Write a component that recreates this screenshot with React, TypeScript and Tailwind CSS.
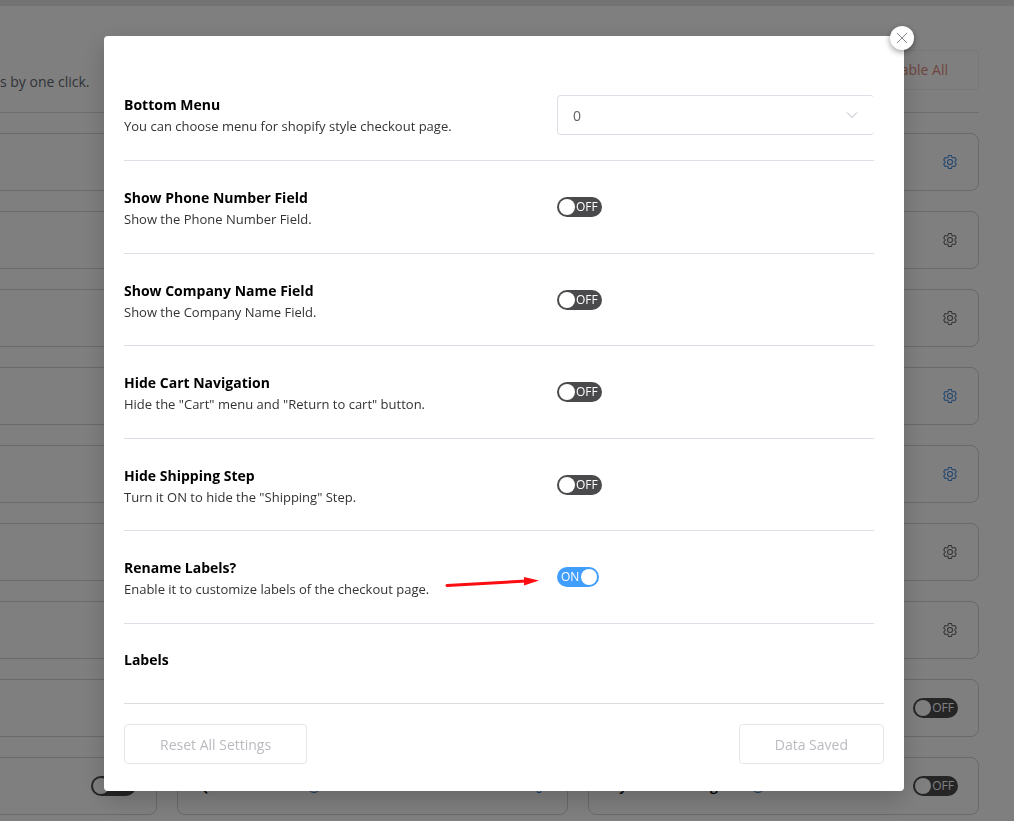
import React, { useState } from 'react';
import clsx from 'clsx';

interface ISetting {
  id: string;
  title: string;
  description: string;
  enabled: boolean;
}

interface IToggle {
  label: string;
  defaultOn?: boolean;
}

interface IRow {
  title: string;
  description: string;
  className?: string;
  children: React.ReactNode;
}

const SETTINGS: ISetting[] = [
  {
    id: 'phone',
    title: 'Show Phone Number Field',
    description: 'Show the Phone Number Field.',
    enabled: false,
  },
  {
    id: 'company',
    title: 'Show Company Name Field',
    description: 'Show the Company Name Field.',
    enabled: false,
  },
  {
    id: 'cart',
    title: 'Hide Cart Navigation',
    description: 'Hide the "Cart" menu and "Return to cart" button.',
    enabled: false,
  },
  {
    id: 'shipping',
    title: 'Hide Shipping Step',
    description: 'Turn it ON to hide the "Shipping" Step.',
    enabled: false,
  },
  {
    id: 'labels',
    title: 'Rename Labels?',
    description: 'Enable it to customize labels of the checkout page.',
    enabled: true,
  },
];

// state of the gear in the right-hand column of each module row
const GEARS = ['active', 'idle', 'idle', 'active', 'active', 'idle', 'idle'];

const Toggle = ({ label, defaultOn = false }: IToggle) => {
  const [isOn, setIsOn] = useState<boolean>(defaultOn);

  return (
    <button
      type="button"
      role="switch"
      aria-checked={isOn}
      aria-label={label}
      onClick={() => setIsOn((prev) => !prev)}
      className={clsx(
        'flex h-5 shrink-0 cursor-pointer items-center rounded-full px-0.5 text-[12px] leading-4 text-white',
        isOn ? 'flex-row-reverse bg-[#409eff]' : 'bg-[#4a4a4d]'
      )}
    >
      <span className="h-4 w-4 rounded-full bg-white" />
      <span className={isOn ? 'px-0.5' : 'pr-0.5 pl-px'}>{isOn ? 'ON' : 'OFF'}</span>
    </button>
  );
};

const GearIcon = () => (
  <svg viewBox="0 0 1024 1024" className="h-4 w-4" fill="currentColor" aria-hidden="true">
    <path d="M600.704 64a32 32 0 0 1 30.464 22.208l35.2 109.376c14.784 7.232 28.928 15.36 42.432 24.512l112.384-24.192a32 32 0 0 1 34.432 15.36L944.32 364.8a32 32 0 0 1-4.032 37.504l-77.12 85.12a357.12 357.12 0 0 1 0 49.024l77.12 85.248a32 32 0 0 1 4.032 37.504l-88.704 153.6a32 32 0 0 1-34.432 15.296L708.8 803.904c-13.44 9.088-27.648 17.28-42.368 24.512l-35.264 109.376A32 32 0 0 1 600.704 960H423.296a32 32 0 0 1-30.464-22.208L357.696 828.48a351.616 351.616 0 0 1-42.56-24.64l-112.32 24.256a32 32 0 0 1-34.432-15.36L79.68 659.2a32 32 0 0 1 4.032-37.504l77.12-85.248a357.12 357.12 0 0 1 0-48.896l-77.12-85.248A32 32 0 0 1 79.68 364.8l88.704-153.6a32 32 0 0 1 34.432-15.296l112.32 24.256c13.568-9.152 27.776-17.408 42.56-24.64l35.2-109.312A32 32 0 0 1 423.232 64H600.64zm-23.424 64H446.72l-36.352 113.088-24.512 11.968a294.113 294.113 0 0 0-34.816 20.096l-22.656 15.36-116.224-25.088-65.28 113.152 79.68 88.192-1.92 27.136a293.12 293.12 0 0 0 0 40.192l1.92 27.136-79.808 88.192 65.344 113.152 116.224-25.024 22.656 15.296a294.113 294.113 0 0 0 34.816 20.096l24.512 11.968L446.72 896h130.688l36.48-113.152 24.448-11.904a288.282 288.282 0 0 0 34.752-20.096l22.592-15.296 116.288 25.024 65.28-113.152-79.744-88.192 1.92-27.136a293.12 293.12 0 0 0 0-40.256l-1.92-27.136 79.808-88.128-65.344-113.152-116.288 24.96-22.592-15.232a287.616 287.616 0 0 0-34.752-20.096l-24.448-11.904L577.344 128zM512 320a192 192 0 1 1 0 384 192 192 0 0 1 0-384zm0 64a128 128 0 1 0 0 256 128 128 0 0 0 0-256z" />
  </svg>
);

const HelpIcon = () => (
  <svg viewBox="0 0 16 16" className="h-4 w-4 text-[#2f6fb8]" fill="none" stroke="currentColor" aria-hidden="true">
    <circle cx="8" cy="8" r="6.500" />
    <path d="M6 6.500a2 2 0 1 1 2.600 1.900c-.4.2-.6.5-.6 1.100M8 11v1" />
  </svg>
);

const Card = ({ children }: { children?: React.ReactNode }) => (
  <div className="flex h-[58px] items-center justify-between rounded-lg border border-[#d4d4d4] px-5 text-sm">
    {children}
  </div>
);

const GearButton = ({ active }: { active: boolean }) => (
  <button
    type="button"
    aria-label="Module settings"
    className={clsx('ml-auto', active ? 'text-[#3a86dd]' : 'text-[#606266]')}
  >
    <GearIcon />
  </button>
);

const ToggleCard = ({ children }: { children?: React.ReactNode }) => (
  <Card>
    {children}
    <div className="ml-auto">
      <Toggle label="Module" />
    </div>
  </Card>
);

const ModulesPage = () => (
  <div className="h-screen overflow-hidden border-t-[6px] border-[#e6e6e6] bg-white text-[#5f6773]">
    <div className="mr-[35px] flex h-[107px] items-end justify-between border-b border-[#dcdcdc] pb-5">
      <p className="text-sm">s by one click.</p>
      <button
        type="button"
        className="mb-0.5 h-10 rounded border border-[#f0f0f0] px-[30px] text-sm text-[#e08a80]"
      >
        Disable All
      </button>
    </div>
    <div className="mt-5 mr-[35px] -ml-[234px] grid grid-cols-3 gap-5">
      {GEARS.map((gear, index) => (
        <React.Fragment key={index}>
          <Card />
          <Card />
          <Card>
            <GearButton active={gear === 'active'} />
          </Card>
        </React.Fragment>
      ))}
      <Card />
      <Card />
      <ToggleCard />
      <ToggleCard />
      <Card>
        <span className="flex items-center gap-1 font-semibold text-black">
          Quick View Box
          <HelpIcon />
        </span>
        <GearButton active />
      </Card>
      <ToggleCard>
        <span className="flex items-center gap-1 font-semibold text-black">
          Dynamic Pricing Tab
          <HelpIcon />
        </span>
      </ToggleCard>
    </div>
  </div>
);

const Row = ({ title, description, className, children }: IRow) => (
  <div className={clsx('flex items-center border-b border-[#dcdfe6] pt-6 pb-[23px]', className)}>
    <div className="w-[433px] shrink-0 pt-0.5">
      <h3 className="mb-0.5 text-sm leading-normal font-bold text-black">{title}</h3>
      <p className="text-[13px] leading-normal text-[#333]">{description}</p>
    </div>
    {children}
  </div>
);

const Arrow = () => (
  <svg viewBox="0 0 96 14" className="absolute top-11 left-80 h-3.5 w-24" aria-hidden="true">
    <path d="M3 10.500 83 6" stroke="#fb0d12" strokeWidth="3" strokeLinecap="round" />
    <path d="M80 2 95 5.500 80 10.500Z" fill="#fb0d12" />
  </svg>
);

const SettingsDialog = () => (
  <div
    role="dialog"
    aria-label="Checkout settings"
    className="relative flex h-full w-full max-w-[800px] flex-col rounded bg-white shadow-[0_8px_24px_rgba(0,0,0,0.2)]"
  >
    <button
      type="button"
      aria-label="Close"
      className="absolute -top-2.5 -right-2.5 flex h-6 w-6 cursor-pointer items-center justify-center rounded-full bg-white text-[#86898e] shadow-[0_2px_6px_rgba(0,0,0,0.4)]"
    >
      <svg viewBox="0 0 12 12" className="h-3 w-3" fill="none" stroke="currentColor" aria-hidden="true">
        <path d="M1 1l10 10M11 1L1 11" />
      </svg>
    </button>

    <div className="min-h-0 flex-1 overflow-hidden pt-8 pr-[30px] pl-5">
      <Row
        title="Bottom Menu"
        description="You can choose menu for shopify style checkout page."
        className="min-h-[93px]"
      >
        <div className="relative min-w-0 flex-1">
          <select
            aria-label="Bottom Menu"
            className="h-10 w-full appearance-none rounded border border-r-0 border-[#dcdfe6] bg-white px-[15px] pt-0.5 text-sm text-[#606266]"
          >
            <option>0</option>
          </select>
          <svg
            viewBox="0 0 12 8"
            className="pointer-events-none absolute top-4 right-4 h-2 w-3"
            fill="none"
            stroke="#b4b8bf"
            aria-hidden="true"
          >
            <path d="M1 1.500l5 5 5-5" />
          </svg>
        </div>
      </Row>
      {SETTINGS.map((setting) => (
        <div key={setting.id} className="relative">
          <Row title={setting.title} description={setting.description}>
            <Toggle label={setting.title} defaultOn={setting.enabled} />
          </Row>
          {setting.id === 'labels' && <Arrow />}
        </div>
      ))}
      <h3 className="pt-[25px] text-sm leading-normal font-bold text-black">Labels</h3>
    </div>

    <div className="mx-5 flex justify-between border-t border-[#dcdcdc] pt-5 pb-[27px]">
      <button
        type="button"
        disabled
        className="h-10 rounded border border-[#e6e6e8] px-[35px] pt-0.5 text-sm text-[#b9bbc0]"
      >
        Reset All Settings
      </button>
      <button
        type="button"
        disabled
        className="h-10 rounded border border-[#e6e6e8] px-[35px] pt-0.5 text-sm text-[#b9bbc0]"
      >
        Data Saved
      </button>
    </div>
  </div>
);

const App = () => (
  <div className="font-['Open_Sans',sans-serif]">
    <ModulesPage />
    <div className="fixed inset-0 flex justify-center bg-black/50 pt-9 pr-1.5 pb-[30px]">
      <SettingsDialog />
    </div>
  </div>
);

export default App;
